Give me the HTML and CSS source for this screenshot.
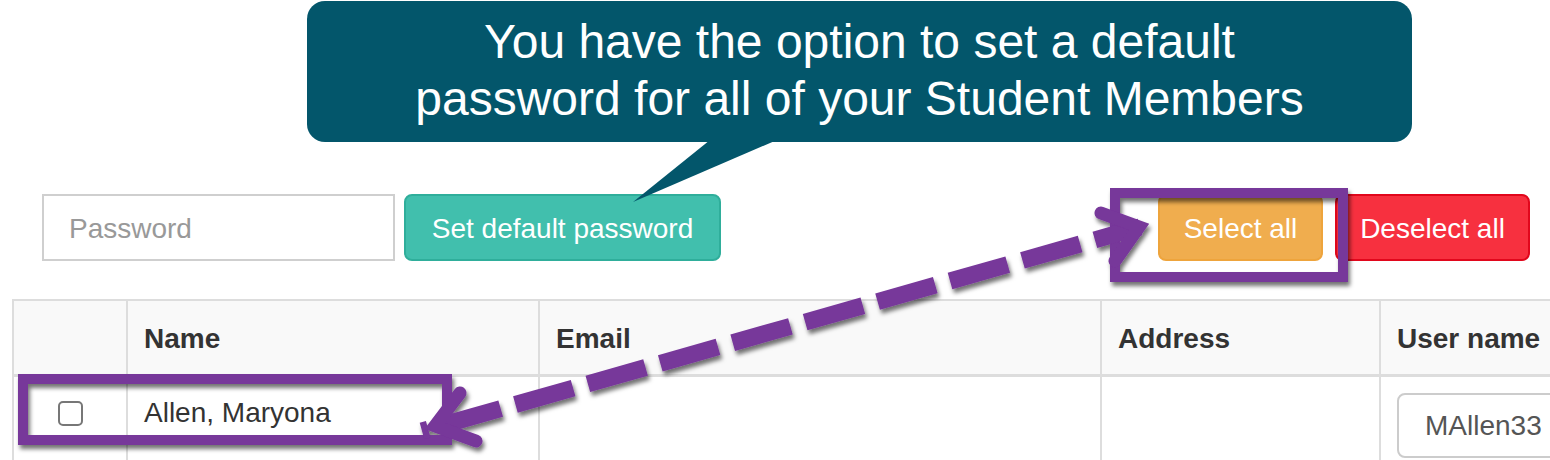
FILE: index.html
```html
<!DOCTYPE html>
<html lang="en">
<head>
<meta charset="utf-8">
<title>Student Members</title>
<link rel="stylesheet" href="styles.css">
</head>
<body>
<div class="page">
  <div class="callout">
    <p class="callout-text">You have the option to set a default<br>password for all of your Student Members</p>
  </div>

  <div class="toolbar">
    <input class="pw-input" type="text" placeholder="Password">
    <button class="btn btn-teal" type="button">Set default password</button>
    <div class="spacer"></div>
    <button class="btn btn-warn" type="button">Select all</button>
    <button class="btn btn-red" type="button">Deselect all</button>
  </div>

  <table class="members">
    <colgroup>
      <col class="c-check">
      <col class="c-name">
      <col class="c-email">
      <col class="c-addr">
      <col class="c-user">
    </colgroup>
    <thead>
      <tr><th></th><th>Name</th><th>Email</th><th>Address</th><th>User name</th></tr>
    </thead>
    <tbody>
      <tr>
        <td><div class="check-wrap"><span class="check"></span></div></td>
        <td>Allen, Maryona</td>
        <td></td>
        <td></td>
        <td><input class="uname" type="text" value="MAllen33"></td>
      </tr>
    </tbody>
  </table>

  <svg class="overlay" width="1550" height="460" viewBox="0 0 1550 460" xmlns="http://www.w3.org/2000/svg">
    <defs>
      <filter id="shadow" x="-5%" y="-20%" width="115%" height="150%">
        <feDropShadow dx="2" dy="4" stdDeviation="2" flood-color="#000" flood-opacity="0.55"/>
      </filter>
    </defs>
    <polygon class="tail" points="710,140 777,140 633,202"/>
    <g class="marks" filter="url(#shadow)">
      <rect x="1115" y="193" width="228" height="84" class="box"/>
      <rect x="23" y="379" width="424" height="61" class="box"/>
      <line x1="422" y1="431" x2="1140" y2="227" class="dash"/>
      <polyline points="460,393 435,426 476,441" class="head"/>
      <polyline points="1101,213 1139,227 1115,261" class="head"/>
    </g>
  </svg>
</div>
</body>
</html>
```

FILE: styles.css
```css
html, body {
  margin: 0;
  padding: 0;
  overflow: hidden;
  background: #fff;
}

.page {
  position: relative;
  width: 1550px;
  height: 460px;
  overflow: hidden;
  font-family: "Liberation Sans", Arial, Helvetica, sans-serif;
  color: #333;
}

.callout {
  margin: 1px 0 0 307px;
  width: 1105px;
  height: 141px;
  box-sizing: border-box;
  padding-top: 12px;
  background: #03566b;
  border-radius: 18px;
}

.callout-text {
  margin: 0;
  color: #fff;
  font-size: 48px;
  line-height: 57px;
  text-align: center;
}

.toolbar {
  display: flex;
  align-items: stretch;
  height: 67px;
  margin-top: 52px;
  padding: 0 20px 0 42px;
}

.pw-input {
  width: 353px;
  box-sizing: border-box;
  margin: 0;
  padding: 2px 0 0 25px;
  border: 2px solid #cfcfcf;
  border-radius: 0;
  font-family: inherit;
  font-size: 28px;
  color: #555;
  outline: none;
}

.pw-input::placeholder {
  color: #999;
}

.btn {
  margin: 0;
  box-sizing: border-box;
  border: 2px solid transparent;
  border-radius: 8px;
  font-family: inherit;
  font-size: 28px;
  color: #fff;
  padding: 2px 0 0 0;
  cursor: pointer;
}

.btn-teal {
  margin-left: 9px;
  width: 317px;
  background: #41bfad;
  border-color: #2fae9b;
}

.spacer {
  flex: 1;
}

.btn-warn {
  width: 165px;
  background: #f0ad4e;
  border-color: #eea43c;
}

.btn-red {
  margin-left: 12px;
  width: 195px;
  background: #f7303f;
  border-color: #e1071c;
}

.members {
  margin: 38px 0 0 12px;
  width: 1667px;
  table-layout: fixed;
  border-collapse: collapse;
  font-size: 28px;
  line-height: 40px;
}

.c-check { width: 114px; }
.c-name { width: 412px; }
.c-email { width: 562px; }
.c-addr { width: 279px; }
.c-user { width: 300px; }

.members th,
.members td {
  border: 2px solid #dddddd;
  text-align: left;
  vertical-align: top;
}

.members th {
  background: #f9f9f9;
  font-weight: bold;
  color: #333;
  padding: 18px 16px 15px 16px;
  border-bottom-width: 3px;
}

.members td {
  padding: 16px 15px 16px 16px;
  color: #333;
}

.check-wrap {
  display: flex;
  justify-content: center;
  align-items: center;
  height: 40px;
}

.check {
  display: block;
  width: 25px;
  height: 25px;
  box-sizing: border-box;
  border: 2px solid #777;
  border-radius: 5px;
  background: #fff;
}

.uname {
  display: block;
  width: 260px;
  height: 65px;
  box-sizing: border-box;
  margin: 0;
  padding: 0 0 0 26px;
  border: 2px solid #cccccc;
  border-radius: 8px;
  font-family: inherit;
  font-size: 28px;
  color: #555;
  outline: none;
}

.overlay {
  position: absolute;
  left: 0;
  top: 0;
  pointer-events: none;
}

.tail {
  fill: #03566b;
}

.box {
  fill: none;
  stroke: #77379a;
  stroke-width: 10;
}

.dash {
  stroke: #77379a;
  stroke-width: 17;
  stroke-dasharray: 60 15.3;
  stroke-dashoffset: 53.5;
}

.head {
  fill: none;
  stroke: #77379a;
  stroke-width: 13;
  stroke-linecap: round;
  stroke-linejoin: miter;
  stroke-miterlimit: 6;
}
```
